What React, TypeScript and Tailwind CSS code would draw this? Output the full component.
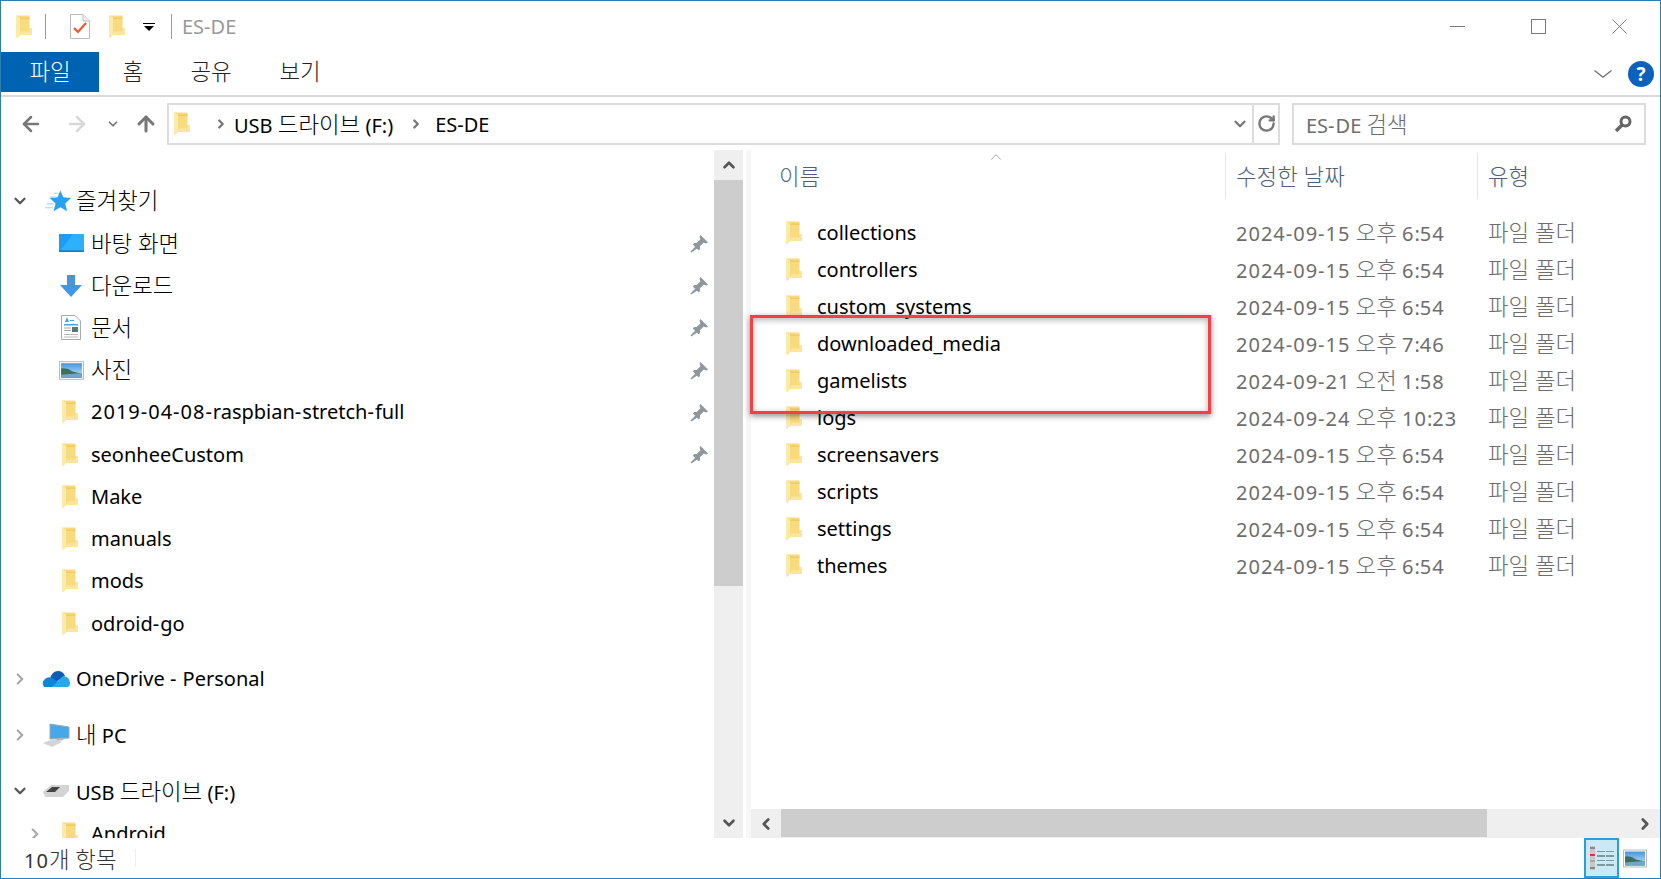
import { ChevronDown, ChevronRight, ChevronLeft, ChevronUp, ArrowLeft, ArrowRight, ArrowUp, RotateCw } from 'lucide-react'

const font = "font-['Noto_Sans','Noto_Sans_CJK_KR',sans-serif]"

// Hangul runs a bit larger than the latin text and digits a bit wider, like Malgun Gothic
function Txt({ text }: { text: string }) {
    const parts = text.split(/([가-힣]+(?: [가-힣]+)*|[\d-]+)/)
    return (
        <>
            {parts.map((part, i) => {
                if (i % 2 === 0) return <span key={i}>{part}</span>
                return /[가-힣]/.test(part)
                    ? <span key={i} className="text-[1.12em] font-light">{part}</span>
                    : <span key={i} className="tracking-[1px]">{part}</span>
            })}
        </>
    )
}

function Folder({ className = '' }: { className?: string }) {
    return (
        <svg viewBox="0 0 16 24" className={`h-6 w-4 shrink-0 ${className}`}>
            <path d="M0 0.5 H13.5 V13 H16 V20 H4 L1 23 L0 21 Z" fill="#f8da7f" />
            <path d="M13.5 13 H16 V20 H4 L5 16.5 H13.5 Z" fill="#fbe5a0" />
            <path d="M0 0.5 L4 2.5 V20 L1 23 L0 21 Z" fill="#fce9ac" />
            <path d="M4 2.5 H13.5 V4 H4 Z" fill="#f2cb62" />
        </svg>
    )
}

function Pin() {
    return (
        <svg viewBox="0 0 20 20" className="h-[19px] w-[19px]">
            <path d="M11 1 L19 9 L17 10 L14.5 9 L10.5 13 L10.5 16 L9 17 L3 11 L4.5 9.5 L7 9.5 L11 5.5 L10 3 Z M6 13 L8 15 L1.5 19.5 L0.5 18.5 Z" fill="#8f979d" />
        </svg>
    )
}

function NavRow({ label, icon, pin, toggle, mt }: { label: string; icon: React.ReactNode; pin?: boolean; toggle?: 'open' | 'closed'; mt?: string }) {
    return (
        <div className={`flex h-[42.25px] shrink-0 items-center ${mt ?? ''}`}>
            <div className="flex w-[40px] pl-[10px]">
                {toggle === 'open' && <ChevronDown size={18} strokeWidth={3} className="text-[#555]" />}
                {toggle === 'closed' && <ChevronRight size={18} strokeWidth={3} className="text-[#aaa]" />}
            </div>
            {icon}
            <span className="ml-[5px] flex-1 truncate text-[20px] text-black"><Txt text={label} /></span>
            {pin && <div className="mr-[5px]"><Pin /></div>}
        </div>
    )
}

const files = [
    ['collections', '2024-09-15 오후 6:54'],
    ['controllers', '2024-09-15 오후 6:54'],
    ['custom_systems', '2024-09-15 오후 6:54'],
    ['downloaded_media', '2024-09-15 오후 7:46'],
    ['gamelists', '2024-09-21 오전 1:58'],
    ['logs', '2024-09-24 오후 10:23'],
    ['screensavers', '2024-09-15 오후 6:54'],
    ['scripts', '2024-09-15 오후 6:54'],
    ['settings', '2024-09-15 오후 6:54'],
    ['themes', '2024-09-15 오후 6:54'],
]

const IconBox = ({ children }: { children: React.ReactNode }) => <div className="flex w-[30px] shrink-0 justify-center">{children}</div>

const favFolders = ['2019-04-08-raspbian-stretch-full', 'seonheeCustom', 'Make', 'manuals', 'mods', 'odroid-go']

function Landscape({ className }: { className: string }) {
    return (
        <svg viewBox="0 0 24 18" className={className}>
            <defs>
                <linearGradient id="sky" x1="0" y1="0" x2="0" y2="1">
                    <stop offset="0" stopColor="#3f97e0" />
                    <stop offset="1" stopColor="#cfe6f5" />
                </linearGradient>
            </defs>
            <rect x="0.5" y="0.5" width="23" height="17" fill="#fff" stroke="#bbb" />
            <rect x="2" y="2" width="20" height="14" fill="url(#sky)" />
            <path d="M2 7 Q8 6 13 10 L22 12 V16 H2 Z" fill="#3d6f5c" />
            <path d="M2 13 L22 11.5 V16 H2 Z" fill="#6fa7c9" />
        </svg>
    )
}

export default function App() {
    return (
        <div className={`${font} flex h-[879px] w-[1661px] flex-col overflow-hidden border border-[#2a7fb0] bg-white`}>
            {/* Title bar */}
            <div className="flex h-[51px] shrink-0 items-center">
                <Folder className="ml-[15px]" />
                <div className="ml-[13px] h-[25px] w-px bg-[#999]" />
                <svg viewBox="0 0 20 25" className="ml-[24px] h-[25px] w-5">
                    <path d="M0.5 0.5 H13 L19.5 7 V24.5 H0.5 Z" fill="#fff" stroke="#bbb" />
                    <path d="M13 0.5 V7 H19.5" fill="#eee" stroke="#bbb" />
                    <path d="M4 14 L8 18 L16 9" fill="none" stroke="#f0562a" strokeWidth="2.2" />
                </svg>
                <Folder className="ml-[19px]" />
                <svg viewBox="0 0 12 8" className="ml-[18px] h-2 w-3">
                    <rect x="0" y="0" width="12" height="1" fill="#000" />
                    <path d="M1 3 H11 L6 8 Z" fill="#000" />
                </svg>
                <div className="ml-[16px] h-[25px] w-px bg-[#999]" />
                <span className="ml-[10px] text-[20px] text-[#999]">ES-DE</span>
                <div className="flex-1" />
                <div className="h-px w-[15px] bg-[#777]" />
                <div className="ml-[66px] h-[15px] w-[15px] border border-[#777]" />
                <svg viewBox="0 0 16 16" className="ml-[66px] mr-[33px] h-[15px] w-[15px]">
                    <path d="M0.5 0.5 L15.5 15.5 M15.5 0.5 L0.5 15.5" stroke="#777" fill="none" />
                </svg>
            </div>

            {/* Ribbon tabs */}
            <div className="flex h-[45px] shrink-0 items-start border-b-2 border-[#dadada]">
                <div className="flex h-10 w-[98px] items-center justify-center bg-[#0063b1] text-[20px] text-white"><Txt text="파일" /></div>
                <div className="flex h-10 w-[68px] items-center justify-center text-[20px] text-[#222]"><Txt text="홈" /></div>
                <div className="flex h-10 w-[88px] items-center justify-center text-[20px] text-[#222]"><Txt text="공유" /></div>
                <div className="flex h-10 w-[90px] items-center justify-center text-[20px] text-[#222]"><Txt text="보기" /></div>
                <div className="flex-1" />
                <ChevronDown size={26} strokeWidth={1} className="mr-[12px] mt-[9px] scale-x-125 text-[#777]" />
                <div className="mr-[6px] mt-[9px] flex h-[26px] w-[26px] items-center justify-center rounded-full bg-[#0a62bd] text-[19px] leading-none font-bold text-white">?</div>
            </div>

            {/* Address bar */}
            <div className="flex h-[53px] shrink-0 items-center">
                <ArrowLeft size={24} strokeWidth={2.5} className="ml-[18px] text-[#777]" />
                <ArrowRight size={24} strokeWidth={2.5} className="ml-[22px] text-[#d8d8d8]" />
                <ChevronDown size={14} strokeWidth={3} className="ml-[17px] text-[#777]" />
                <ArrowUp size={24} strokeWidth={3} className="ml-[14px] text-[#777]" />
                <div className="ml-[9px] flex h-[42px] w-[1113px] items-center border-2 border-[#dcdcdc]">
                    <Folder className="ml-[5px]" />
                    <ChevronRight size={14} strokeWidth={4} className="ml-[24px] text-[#777]" />
                    <span className="ml-[6px] pt-[3px] text-[20px] text-black"><Txt text="USB 드라이브 (F:)" /></span>
                    <ChevronRight size={14} strokeWidth={4} className="ml-[16px] text-[#777]" />
                    <span className="ml-[12px] pt-[3px] text-[20px] text-black">ES-DE</span>
                    <div className="flex-1" />
                    <ChevronDown size={18} strokeWidth={3} className="mr-[3px] text-[#777]" />
                    <div className="flex h-full w-[26px] items-center justify-center border-l-2 border-[#dcdcdc]">
                        <RotateCw size={19} strokeWidth={3} className="text-[#777]" />
                    </div>
                </div>
                <div className="ml-[12px] flex h-[42px] w-[354px] items-center border-2 border-[#dcdcdc] px-[12px]">
                    <span className="flex-1 pt-[3px] text-[20px] text-[#6d6d6d]"><Txt text="ES-DE 검색" /></span>
                    <svg viewBox="0 0 18 18" className="h-[18px] w-[18px]">
                        <circle cx="11.5" cy="6.5" r="4.5" fill="none" stroke="#666" strokeWidth="3" />
                        <path d="M8 10 L2 16" stroke="#666" strokeWidth="3.5" />
                    </svg>
                </div>
            </div>

            {/* Main */}
            <div className="flex min-h-0 flex-1">
                {/* Sidebar */}
                <div className="mb-[40px] flex w-[713px] shrink-0 flex-col overflow-hidden pt-[30px]">
                    <NavRow label="즐겨찾기" toggle="open" icon={
                        <IconBox>
                            <svg viewBox="0 0 28 22" className="ml-[3px] h-[22px] w-7">
                                <path d="M17 0 L20 7 L28 8 L22 13.5 L24 21.5 L17 17.5 L10 21.5 L12 13.5 L6 8 L14 7 Z" fill="#2aa0f0" />
                                <path d="M10 3 H15 M6 7 H13 M1 18 H9 M3 14 H10" stroke="#a9d8f8" strokeWidth="1.2" />
                            </svg>
                        </IconBox>
                    } />
                    <div className="pl-[15px]">
                        <NavRow label="바탕 화면" pin icon={
                            <IconBox>
                                <svg viewBox="0 0 25 18" className="h-[18px] w-[25px]">
                                    <rect width="25" height="18" fill="#1e9cf5" />
                                    <path d="M14 0 H25 V16 H2 Z" fill="#2fb0fb" />
                                    <rect y="16.5" width="25" height="1.5" fill="#1a7dc0" />
                                </svg>
                            </IconBox>
                        } />
                        <NavRow label="다운로드" pin icon={
                            <IconBox><svg viewBox="0 0 24 24" className="h-6 w-6"><path d="M8 1 H16 V11 H23 L12 23 L1 11 H8 Z" fill="#3f97e6" /></svg></IconBox>
                        } />
                        <NavRow label="문서" pin icon={
                            <IconBox>
                                <svg viewBox="0 0 20 25" className="h-[25px] w-5">
                                    <path d="M0.5 0.5 H14 L19.5 6 V24.5 H0.5 Z" fill="#fff" stroke="#aaa" />
                                    <path d="M4 7 L6 2 L8 7 Z" fill="#4aa3e0" />
                                    <rect x="9" y="5" width="4" height="1" fill="#4aa3e0" />
                                    <rect x="3" y="9" width="14" height="1.5" fill="#4aa3e0" />
                                    <rect x="3" y="12.5" width="7" height="1" fill="#aaa" />
                                    <rect x="3" y="15" width="7" height="1" fill="#aaa" />
                                    <rect x="11" y="12" width="6" height="5" fill="#577" />
                                    <rect x="3" y="19" width="14" height="1" fill="#bbb" />
                                    <rect x="3" y="21.5" width="14" height="1" fill="#bbb" />
                                </svg>
                            </IconBox>
                        } />
                        <NavRow label="사진" pin icon={<IconBox><Landscape className="h-[19px] w-[25px]" /></IconBox>} />
                        {favFolders.map((name, i) => (
                            <NavRow key={name} label={name} pin={i < 2} icon={<IconBox><Folder className="-ml-[2px]" /></IconBox>} />
                        ))}
                    </div>
                    <NavRow label="OneDrive - Personal" toggle="closed" mt="mt-[13px]" icon={
                        <IconBox>
                            <svg viewBox="0 0 28 18" className="h-[18px] w-7">
                                <path d="M8 9 Q10 1 16 1 Q21 1 23 6 L14 12 Z" fill="#0a5fb5" />
                                <path d="M2 17 Q-1 12 3 9 Q6 6 10 8 L18 13 L10 17 Z" fill="#1084d8" />
                                <path d="M10 17 L21 6 Q28 7 28 13 Q28 17 25 17 Z" fill="#28a8ea" />
                            </svg>
                        </IconBox>
                    } />
                    <NavRow label="내 PC" toggle="closed" mt="mt-[14px]" icon={
                        <IconBox>
                            <svg viewBox="0 0 28 24" className="h-6 w-7">
                                <path d="M8 1 L27 4 V15 L8 16 Z" fill="#45a8e8" stroke="#9ab" />
                                <path d="M14 16 L20 15 L22 17 L15 18 Z" fill="#bbb" />
                                <path d="M1 20 L12 16 L20 19 L10 24 Z" fill="#d4d4d4" />
                            </svg>
                        </IconBox>
                    } />
                    <NavRow label="USB 드라이브 (F:)" toggle="open" mt="mt-[14px]" icon={
                        <IconBox>
                            <svg viewBox="0 0 26 14" className="h-[14px] w-[26px]">
                                <path d="M0 8 L8 1 H26 V7 L20 13 H2 Z" fill="#d4d4d4" />
                                <path d="M3 8 L9 3 H17 L12 8 Z" fill="#444" />
                            </svg>
                        </IconBox>
                    } />
                    <div className="pl-[15px]">
                        <NavRow label="Android" toggle="closed" icon={<IconBox><Folder className="-ml-[2px]" /></IconBox>} />
                    </div>
                </div>

                {/* Sidebar scrollbar */}
                <div className="mb-[40px] flex w-[29px] shrink-0 flex-col bg-[#efefef]">
                    <div className="flex h-[30px] items-center justify-center"><ChevronUp size={18} strokeWidth={3.5} className="text-[#555]" /></div>
                    <div className="h-[406px] bg-[#cdcdcd]" />
                    <div className="flex-1" />
                    <div className="flex h-[30px] items-center justify-center"><ChevronDown size={18} strokeWidth={3.5} className="text-[#555]" /></div>
                </div>
                <div className="mb-[40px] ml-[3px] w-[5px] bg-[#f7f7f7]" />

                {/* File list */}
                <div className="relative flex min-w-0 flex-1 flex-col">
                    <div className="mt-[3px] flex h-[46px] shrink-0 text-[20px] text-[#4c607a]">
                        <div className="relative flex w-[475px] items-center border-r border-[#e5e5e5] pl-[28px] pt-[2px]">
                            <Txt text="이름" />
                            <ChevronUp size={18} strokeWidth={1} className="absolute top-[-5px] left-[236px] text-[#888]" />
                        </div>
                        <div className="flex w-[252px] items-center border-r border-[#e5e5e5] pl-[10px] pt-[2px]"><Txt text="수정한 날짜" /></div>
                        <div className="flex flex-1 items-center pl-[10px] pt-[2px]"><Txt text="유형" /></div>
                    </div>
                    <div className="flex-1 overflow-hidden pt-[15px]">
                        {files.map(([name, date]) => (
                            <div key={name} className="flex h-[37px] items-center text-[20px]">
                                <Folder className="ml-[35px]" />
                                <span className="ml-[15px] w-[419px] text-black">{name}</span>
                                <span className="w-[252px] text-[#6d6d6d]"><Txt text={date} /></span>
                                <span className="text-[#6d6d6d]"><Txt text="파일 폴더" /></span>
                            </div>
                        ))}
                    </div>
                    {/* Horizontal scrollbar */}
                    <div className="flex h-[29px] shrink-0 bg-[#efefef]">
                        <div className="flex w-[30px] items-center justify-center"><ChevronLeft size={18} strokeWidth={3.5} className="text-[#555]" /></div>
                        <div className="h-[28px] w-[706px] bg-[#cdcdcd]" />
                        <div className="flex-1" />
                        <div className="flex w-[30px] items-center justify-center"><ChevronRight size={18} strokeWidth={3.5} className="text-[#555]" /></div>
                    </div>
                    <div className="h-[40px] shrink-0" />
                    {/* Annotation box */}
                    <div className="absolute top-[165px] left-[-1px] h-[99px] w-[461px] border-[3px] border-[#f34040] shadow-[0_2px_6px_rgba(0,0,0,0.45),inset_0_2px_6px_rgba(0,0,0,0.3)]" />
                </div>
            </div>

            {/* Status bar, overlays the scrollbar gutter */}
            <div className="-mt-[40px] flex h-[40px] shrink-0 items-center">
                <span className="ml-[23px] pt-[3px] text-[20px] text-[#333]"><Txt text="10개 항목" /></span>
                <div className="ml-[18px] h-[18px] w-px bg-[#eee]" />
                <div className="flex-1" />
                <div className="flex h-full w-[35px] items-center justify-center gap-[2px] border-2 border-[#26a0da] bg-[#cbe8f6]">
                    <div className="flex h-[24px] w-[5px] flex-col justify-between bg-[#c8c8c8] py-[1px]">
                        <div className="h-[2px] bg-[#888]" />
                        <div className="h-[2px] bg-[#d33]" />
                        <div className="h-[2px] bg-[#aa9]" />
                        <div className="h-[2px] bg-[#888]" />
                    </div>
                    <div className="flex flex-col gap-[3px]">
                        {[0, 1, 2, 3].map(i => (
                            <div key={i} className="flex gap-[1px]">
                                <div className="h-[1.5px] w-[8px] bg-[#7f9a9f]" />
                                <div className="h-[1.5px] w-[8px] bg-[#7f9a9f]" />
                            </div>
                        ))}
                    </div>
                </div>
                <Landscape className="ml-[4px] mr-[13px] h-[19px] w-6" />
            </div>
        </div>
    )
}
